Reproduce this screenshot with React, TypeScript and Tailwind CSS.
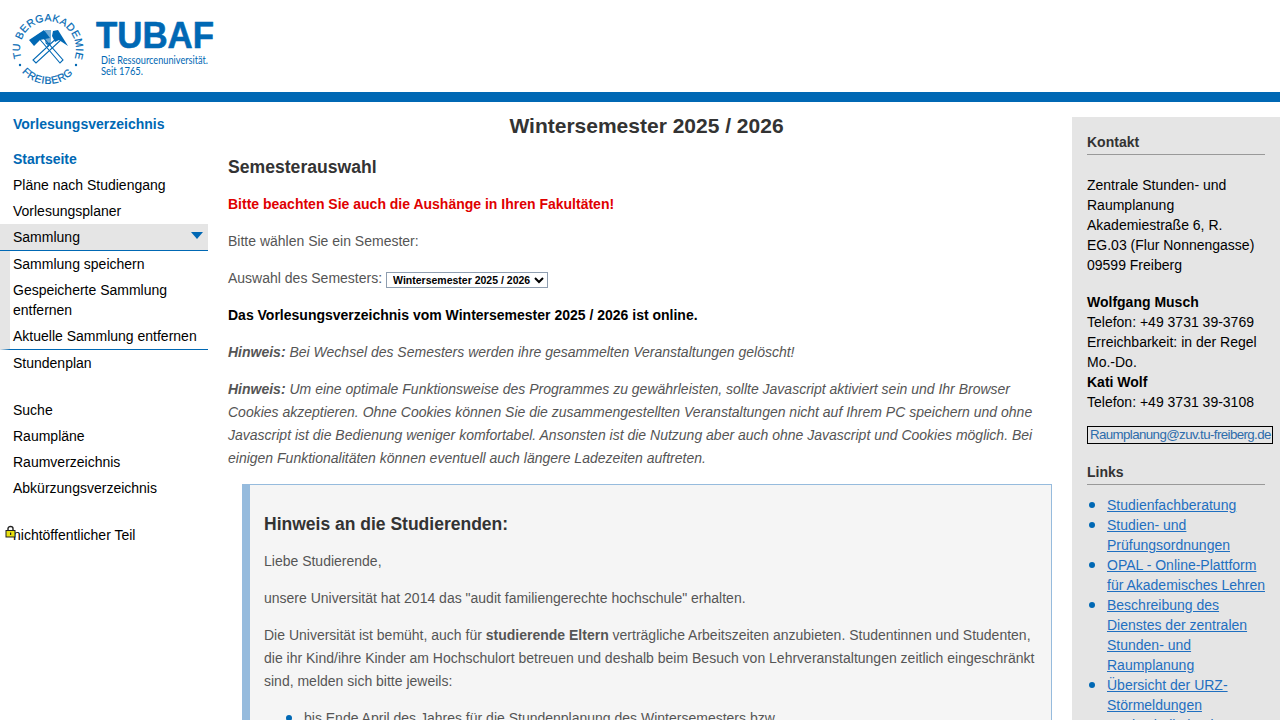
const navBefore = ["Pläne nach Studiengang", "Vorlesungsplaner"]
const navSub = ["Sammlung speichern", "Gespeicherte Sammlung entfernen", "Aktuelle Sammlung entfernen"]
const navAfter = ["Suche", "Raumpläne", "Raumverzeichnis", "Abkürzungsverzeichnis"]

const links = [
  "Studienfachberatung",
  "Studien- und Prüfungsordnungen",
  "OPAL - Online-Plattform für Akademisches Lehren",
  "Beschreibung des Dienstes der zentralen Stunden- und Raumplanung",
  "Übersicht der URZ-Störmeldungen",
  "Hochschulkalender",
]

function Logo() {
  return (
    <svg width="215" height="92" viewBox="0 0 215 92" className="block">
      <defs>
        <path id="sealTop" d="M 21.4 58 A 28 28 0 1 1 74.6 58" />
        <path id="sealBottom" d="M 21.2 71.5 A 35 35 0 0 0 74.8 71.5" />
      </defs>
      <text fill="#0068b4" stroke="#0068b4" strokeWidth="0.2" fontFamily="'Liberation Sans', sans-serif" fontSize="10.5" letterSpacing="0.35">
        <textPath href="#sealTop">TU BERGAKADEMIE</textPath>
      </text>
      <text fill="#0068b4" stroke="#0068b4" strokeWidth="0.2" fontFamily="'Liberation Sans', sans-serif" fontSize="10.5" letterSpacing="0.5">
        <textPath href="#sealBottom" startOffset="1">FREIBERG</textPath>
      </text>
      <circle cx="20" cy="65" r="1.2" fill="#0068b4" />
      <circle cx="76" cy="65" r="1.2" fill="#0068b4" />
      {/* Schlaegel und Eisen */}
      <g stroke="#0068b4" strokeWidth="1.1" fill="none">
        <path d="M37 36 L60 63 L63 60 L40 34 Z" />
        <path d="M59 36 L33 60 L36 63 L62 39 Z" />
        <path d="M46 30 V42 C46 45 50 45 50 42 V30 M48 30 V47" />
      </g>
      <path d="M29 40 L44 30 L50 38 L40 40 L34 46 Z" fill="#0068b4" />
      <path d="M52 36 L53 31 L58 30 L68 46 L59 40 L55 42 Z" fill="#0068b4" />
      <text x="96" y="48" fill="#0068b4" stroke="#0068b4" strokeWidth="0.6" fontFamily="'Liberation Sans', sans-serif" fontWeight="700" fontSize="37.5" textLength="118" lengthAdjust="spacingAndGlyphs">TUBAF</text>
      <text x="101" y="64" fill="#0068b4" fontFamily="Lato, sans-serif" fontSize="10.5" textLength="107" lengthAdjust="spacingAndGlyphs">Die Ressourcenuniversität.</text>
      <text x="101" y="75" fill="#0068b4" fontFamily="Lato, sans-serif" fontSize="10.5" textLength="42" lengthAdjust="spacingAndGlyphs">Seit 1765.</text>
    </svg>
  )
}

function LockIcon() {
  return (
    <svg width="11" height="13" viewBox="0 0 11 13" className="absolute left-[5px] top-[3px]">
      <path d="M3 6 V3.5 C3 0.8 8 0.8 8 3.5 V6" fill="none" stroke="#222" strokeWidth="1.4" />
      <rect x="1" y="5.5" width="9" height="6.5" fill="#e8e010" stroke="#222" />
      <rect x="5" y="7.5" width="1.2" height="2.5" fill="#222" />
    </svg>
  )
}

function NavItem({ label }: { label: string }) {
  return <div className="px-[13px] py-[3px] text-black">{label}</div>
}

export default function App() {
  return (
    <div className="h-[720px] overflow-hidden bg-white font-['Liberation_Sans',Arial,sans-serif] text-[14px] leading-5 text-[#555]">
      <header className="h-[92px]">
        <Logo />
      </header>
      <div className="h-[10px] bg-[#0068b4]" />

      <div className="flex items-start">
        {/* Navigation */}
        <nav className="w-[208px] shrink-0 pt-3">
          <div className="mb-3 px-[13px] font-bold text-[#0068b4]">Vorlesungsverzeichnis</div>
          <div className="px-[13px] py-[3px] font-bold text-[#0068b4]">Startseite</div>
          {navBefore.map((item) => (
            <NavItem key={item} label={item} />
          ))}
          <div className="relative border-b border-[#0068b4] bg-[#e5e5e5] px-[13px] py-[3px] text-black">
            Sammlung
            <span className="absolute right-[5px] top-[8px] h-0 w-0 border-x-[6.5px] border-t-[7px] border-x-transparent border-t-[#0068b4]" />
          </div>
          <div className="border-b border-l-[10px] border-b-[#0068b4] border-l-[#e5e5e5] [&>div]:pl-[3px] [&>div]:pr-2">
            {navSub.map((item) => (
              <NavItem key={item} label={item} />
            ))}
          </div>
          <NavItem label="Stundenplan" />
          <div className="mt-[21px]">
            {navAfter.map((item) => (
              <NavItem key={item} label={item} />
            ))}
          </div>
          <div className="relative mt-[21px]">
            <LockIcon />
            <NavItem label="nichtöffentlicher Teil" />
          </div>
        </nav>

        {/* Inhalt */}
        <main className="ml-5 w-[824px] shrink-0 leading-[23px]">
          <h1 className="mt-[9px] pl-[13px] text-center text-[21px] font-bold leading-[30px] text-[#333]">
            Wintersemester 2025 / 2026
          </h1>
          <h2 className="mt-[12px] text-[17.6px] font-bold leading-[28px] text-[#333]">Semesterauswahl</h2>
          <p className="mt-[12px] font-bold text-[#e00000]">Bitte beachten Sie auch die Aushänge in Ihren Fakultäten!</p>
          <p className="mt-[14px]">Bitte wählen Sie ein Semester:</p>
          <p className="mt-[14px] flex items-center">
            Auswahl des Semesters:
            <select className="ml-1 mt-[2px] h-4 w-[162px] rounded-none border border-[#8f9eb0] bg-white pl-[2px] text-[10.5px] leading-3 font-bold text-black">
              <option>Wintersemester 2025 / 2026</option>
            </select>
          </p>
          <p className="mt-[14px] font-bold text-black">
            Das Vorlesungsverzeichnis vom Wintersemester 2025 / 2026 ist online.
          </p>
          <p className="mt-[14px] italic">
            <b>Hinweis:</b> Bei Wechsel des Semesters werden ihre gesammelten Veranstaltungen gelöscht!
          </p>
          <p className="mt-[14px] italic">
            <b>Hinweis:</b> Um eine optimale Funktionsweise des Programmes zu gewährleisten, sollte Javascript aktiviert
            sein und Ihr Browser Cookies akzeptieren. Ohne Cookies können Sie die zusammengestellten Veranstaltungen nicht
            auf Ihrem PC speichern und ohne Javascript ist die Bedienung weniger komfortabel. Ansonsten ist die Nutzung
            aber auch ohne Javascript und Cookies möglich. Bei einigen Funktionalitäten können eventuell auch längere
            Ladezeiten auftreten.
          </p>

          <section className="ml-[14px] mt-[14px] border border-l-[8px] border-[#96bbdd] bg-[#f5f5f5] pb-6 pl-[14px] pr-4 pt-[25px]">
            <h3 className="text-[17.5px] font-bold leading-[28px] text-[#333]">Hinweis an die Studierenden:</h3>
            <p className="mt-[12px]">Liebe Studierende,</p>
            <p className="mt-[14px]">unsere Universität hat 2014 das "audit familiengerechte hochschule" erhalten.</p>
            <p className="mt-[14px]">
              Die Universität ist bemüht, auch für <b>studierende Eltern</b> verträgliche Arbeitszeiten anzubieten.
              Studentinnen und Studenten, die ihr Kind/ihre Kinder am Hochschulort betreuen und deshalb beim Besuch von
              Lehrveranstaltungen zeitlich eingeschränkt sind, melden sich bitte jeweils:
            </p>
            <ul className="mt-[14px] pl-10">
              <li className="relative before:absolute before:left-[-18px] before:top-[8px] before:size-[6px] before:rounded-full before:bg-[#0068b4]">
                bis Ende April des Jahres für die Stundenplanung des Wintersemesters bzw.
              </li>
            </ul>
          </section>
        </main>

        {/* Kontakt und Links */}
        <aside className="ml-5 mt-[15px] w-[208px] shrink-0 bg-[#e5e5e5] pb-10 pl-[15px] pr-[15px] pt-[15px] text-black">
          <h4 className="border-b border-[#999] pb-[2px] font-bold text-[#333]">Kontakt</h4>
          <p className="mt-5">
            Zentrale Stunden- und Raumplanung
            <br />
            Akademiestraße 6, R. EG.03 (Flur Nonnengasse)
            <br />
            09599 Freiberg
          </p>
          <p className="mt-[17px]">
            <b>Wolfgang Musch</b>
            <br />
            Telefon: +49 3731 39-3769
            <br />
            Erreichbarkeit: in der Regel Mo.-Do.
            <br />
            <b>Kati Wolf</b>
            <br />
            Telefon: +49 3731 39-3108
          </p>
          <div className="mt-[14px] w-[186px] whitespace-nowrap border border-black pl-[2px] text-[13.3px] leading-4 tracking-[-0.6px] text-[#2d6cab]">
            Raumplanung@zuv.tu-freiberg.de
          </div>
          <h4 className="mt-[18px] border-b border-[#999] pb-[2px] font-bold text-[#333]">Links</h4>
          <ul className="mt-[10px] pl-5">
            {links.map((link) => (
              <li
                key={link}
                className="relative text-[#1f6fc0] underline before:absolute before:left-[-18px] before:top-[7px] before:size-[6px] before:rounded-full before:bg-[#0068b4]"
              >
                {link}
              </li>
            ))}
          </ul>
        </aside>
      </div>
    </div>
  )
}
